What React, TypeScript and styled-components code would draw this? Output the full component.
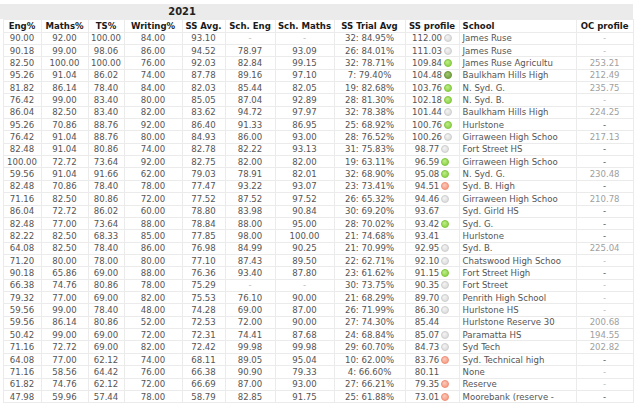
import React from 'react'
import styled, { createGlobalStyle } from 'styled-components'

const GlobalStyle = createGlobalStyle`
  html, body { margin: 0; padding: 0; background: #fff; }
  body { font-family: "DejaVu Sans Condensed", "DejaVu Sans", Verdana, sans-serif; }
`

const Page = styled.div`
  width: 640px;
  padding-top: 4px;
`

const Table = styled.table`
  border-collapse: collapse;
  table-layout: fixed;
  width: 633px;
  font-size: 9.5px;
  color: #555;
`

const YearRow = styled.tr`
  height: 15px;
  background: #ebebeb;
`

const YearCell = styled.th`
  padding: 0 41px 0 0;
  border: none;
  font-size: 11px;
  font-weight: bold;
  color: #222;
  text-align: center;
  line-height: 13px;
`

const HeadRow = styled.tr`
  height: 13px;
`

const HeadCell = styled.th<{ $left?: boolean }>`
  padding: 0 1px 0 ${(p) => (p.$left ? '3px' : '1px')};
  border: 1px solid #ebebeb;
  font-weight: bold;
  color: #1a1a1a;
  text-align: ${(p) => (p.$left ? 'left' : 'center')};
  white-space: nowrap;
  overflow: hidden;
  line-height: 11px;
`

const Row = styled.tr`
  height: 12.37px;
`

const Spacer = styled.td`
  padding: 0;
  border: none;
  border-right: 1px solid #ebebeb;
`

type Tone = 'normal' | 'muted' | 'faint'

const toneColor: Record<Tone, string> = {
  normal: '#555',
  muted: '#a0a0a0',
  faint: '#bbb',
}

const Cell = styled.td<{ $left?: boolean; $tone?: Tone }>`
  padding: 0 1px 0 ${(p) => (p.$left ? '3px' : '1px')};
  border: 1px solid #ebebeb;
  text-align: ${(p) => (p.$left ? 'left' : 'center')};
  color: ${(p) => toneColor[p.$tone ?? 'normal']};
  white-space: nowrap;
  overflow: hidden;
  line-height: 10px;
`

type DotKind = 'grey' | 'green' | 'dark' | 'red' | 'none'

const dotColors: Record<DotKind, [string, string, string]> = {
  grey: ['#f4f4f4', '#dedede', '#cfcfcf'],
  green: ['#bdee86', '#94d651', '#84c644'],
  dark: ['#a2c872', '#7aa848', '#6a963b'],
  red: ['#fcc9b9', '#f7a28b', '#ef917a'],
  none: ['transparent', 'transparent', 'transparent'],
}

const Dot = styled.span<{ $kind: DotKind }>`
  display: inline-block;
  width: 8px;
  height: 8px;
  margin-left: 2px;
  border-radius: 50%;
  vertical-align: -1px;
  box-sizing: border-box;
  background: ${(p) =>
    `radial-gradient(circle at 40% 35%, ${dotColors[p.$kind][0]}, ${dotColors[p.$kind][1]} 70%)`};
  border: 1px solid ${(p) => dotColors[p.$kind][2]};
`

type Rec = [string, string, string, string, string, string, string, string, string, DotKind, string, string, Tone?]

const rows: Rec[] = [
  ['90.00', '92.00', '100.00', '84.00', '93.10', '-', '-', '32: 84.95%', '112.00', 'grey', 'James Ruse', '-', 'faint'],
  ['90.18', '99.00', '98.06', '86.00', '94.52', '78.97', '93.09', '26: 84.01%', '111.03', 'grey', 'James Ruse', '-', 'faint'],
  ['82.50', '100.00', '100.00', '76.00', '92.03', '82.84', '99.15', '32: 78.71%', '109.84', 'green', 'James Ruse Agricultu', '253.21'],
  ['95.26', '91.04', '86.02', '74.00', '87.78', '89.16', '97.10', '7: 79.40%', '104.48', 'dark', 'Baulkham Hills High', '212.49'],
  ['81.82', '86.14', '78.40', '84.00', '82.03', '85.44', '82.05', '19: 82.68%', '103.76', 'green', 'N. Syd. G.', '235.75'],
  ['76.42', '99.00', '83.40', '80.00', '85.05', '87.04', '92.89', '28: 81.30%', '102.18', 'green', 'N. Syd. B.', '-', 'faint'],
  ['86.04', '82.50', '83.40', '82.00', '83.62', '94.72', '97.97', '32: 78.38%', '101.44', 'grey', 'Baulkham Hills High', '224.25'],
  ['95.26', '70.86', '88.76', '92.00', '86.40', '91.33', '86.95', '25: 68.92%', '100.76', 'green', 'Hurlstone', '-', 'normal'],
  ['76.42', '91.04', '88.76', '80.00', '84.93', '86.00', '93.00', '28: 76.52%', '100.26', 'grey', 'Girraween High Schoo', '217.13'],
  ['82.48', '91.04', '80.86', '74.00', '82.78', '82.22', '93.13', '31: 75.83%', '98.77', 'grey', 'Fort Street HS', '-', 'normal'],
  ['100.00', '72.72', '73.64', '92.00', '82.75', '82.00', '82.00', '19: 63.11%', '96.59', 'green', 'Girraween High Schoo', '-', 'normal'],
  ['59.56', '91.04', '91.66', '62.00', '79.03', '78.91', '82.01', '32: 68.90%', '95.08', 'green', 'N. Syd. G.', '230.48'],
  ['82.48', '70.86', '78.40', '78.00', '77.47', '93.22', '93.07', '23: 73.41%', '94.51', 'red', 'Syd. B. High', '-', 'normal'],
  ['71.16', '82.50', '80.86', '72.00', '77.52', '87.52', '97.52', '26: 65.32%', '94.46', 'grey', 'Girraween High Schoo', '210.78'],
  ['86.04', '72.72', '86.02', '60.00', '78.80', '83.98', '90.84', '30: 69.20%', '93.67', 'none', 'Syd. Girld HS', '-', 'normal'],
  ['82.48', '77.00', '73.64', '88.00', '78.84', '88.00', '95.00', '28: 70.02%', '93.42', 'green', 'Syd. G.', '-', 'normal'],
  ['82.22', '82.50', '68.33', '85.00', '77.85', '98.00', '100.00', '21: 74.68%', '93.41', 'none', 'Hurlstone', '-', 'normal'],
  ['64.08', '82.50', '78.40', '86.00', '76.98', '84.99', '90.25', '21: 70.99%', '92.95', 'grey', 'Syd. B.', '225.04'],
  ['71.20', '80.00', '78.00', '80.00', '77.10', '87.43', '89.50', '22: 62.71%', '92.10', 'grey', 'Chatswood High Schoo', '-', 'faint'],
  ['90.18', '65.86', '69.00', '88.00', '76.36', '93.40', '87.80', '23: 61.62%', '91.15', 'green', 'Fort Street High', '-', 'normal'],
  ['66.38', '74.76', '80.86', '78.00', '75.29', '-', '-', '30: 73.75%', '90.35', 'grey', 'Fort Street', '-', 'faint'],
  ['79.32', '77.00', '69.00', '82.00', '75.53', '76.10', '90.00', '21: 68.29%', '89.70', 'grey', 'Penrith High School', '-', 'faint'],
  ['59.56', '99.00', '78.40', '48.00', '74.28', '69.00', '87.00', '26: 71.99%', '86.30', 'grey', 'Hurlstone HS', '-', 'faint'],
  ['59.56', '86.14', '80.86', '52.00', '72.53', '72.00', '90.00', '27: 74.30%', '85.44', 'none', 'Hurlstone Reserve 30', '200.68'],
  ['50.42', '99.00', '69.00', '72.00', '72.31', '74.41', '87.68', '24: 68.84%', '85.07', 'grey', 'Paramatta HS', '194.55'],
  ['71.16', '72.72', '69.00', '82.00', '72.42', '99.98', '99.98', '29: 60.70%', '84.73', 'grey', 'Syd Tech', '202.82'],
  ['64.08', '77.00', '62.12', '74.00', '68.11', '89.05', '95.04', '10: 62.00%', '83.76', 'red', 'Syd. Technical high', '-', 'normal'],
  ['71.16', '58.56', '64.42', '76.00', '66.38', '90.90', '79.33', '4: 66.60%', '80.11', 'none', 'None', '-', 'faint'],
  ['61.82', '74.76', '62.12', '72.00', '66.69', '87.00', '93.00', '27: 66.21%', '79.35', 'red', 'Reserve', '-', 'faint'],
  ['47.98', '59.96', '57.44', '78.00', '58.79', '82.85', '91.75', '25: 61.88%', '73.01', 'red', 'Moorebank (reserve -', '-', 'normal'],
]

const widths = [3, 38, 47, 36, 58, 43, 50, 59, 71, 54, 117, 57]

const headers = ['Eng%', 'Maths%', 'TS%', 'Writing%', 'SS Avg.', 'Sch. Eng', 'Sch. Maths', 'SS Trial Avg', 'SS profile']

const dashTone = (v: string): Tone => (v === '-' ? 'faint' : 'normal')

export default function App() {
  return (
    <Page>
      <GlobalStyle />
      <Table>
        <colgroup>
          {widths.map((w, i) => (
            <col key={i} style={{ width: w }} />
          ))}
        </colgroup>
        <thead>
          <YearRow>
            <YearCell colSpan={9}>2021</YearCell>
            <YearCell colSpan={3} />
          </YearRow>
          <HeadRow>
            <Spacer />
            {headers.map((h) => (
              <HeadCell key={h}>{h}</HeadCell>
            ))}
            <HeadCell $left>School</HeadCell>
            <HeadCell>OC profile</HeadCell>
          </HeadRow>
        </thead>
        <tbody>
          {rows.map((r, i) => {
            const [eng, maths, ts, writing, avg, schEng, schMaths, trial, profile, dot, school, oc, ocTone] = r
            return (
              <Row key={i}>
                <Spacer />
                <Cell>{eng}</Cell>
                <Cell>{maths}</Cell>
                <Cell>{ts}</Cell>
                <Cell>{writing}</Cell>
                <Cell>{avg}</Cell>
                <Cell $tone={dashTone(schEng)}>{schEng}</Cell>
                <Cell $tone={dashTone(schMaths)}>{schMaths}</Cell>
                <Cell>{trial}</Cell>
                <Cell>
                  {profile}
                  <Dot $kind={dot} />
                </Cell>
                <Cell $left>{school}</Cell>
                <Cell $tone={oc === '-' ? ocTone : 'muted'}>{oc}</Cell>
              </Row>
            )
          })}
        </tbody>
      </Table>
    </Page>
  )
}
